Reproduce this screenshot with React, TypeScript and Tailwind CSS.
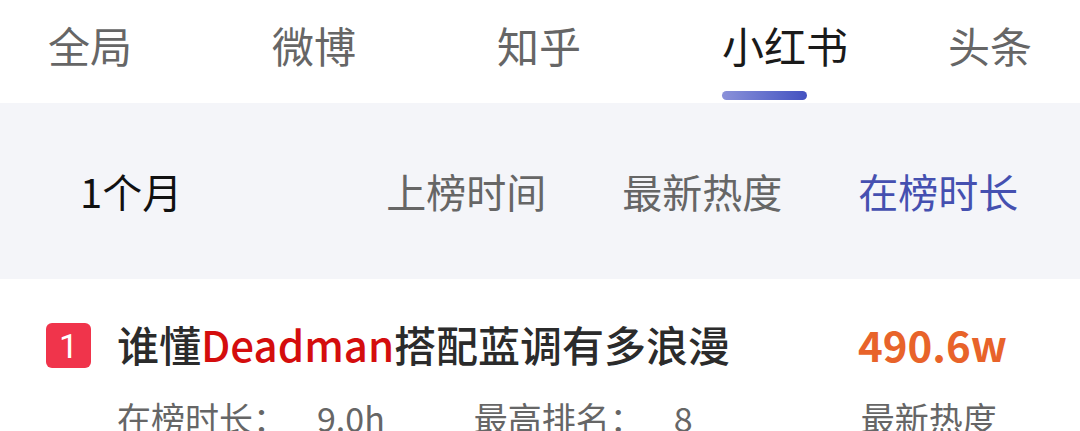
import React from 'react';

const tabs = [
  { label: '全局', ml: 'ml-[48px]' },
  { label: '微博', ml: 'ml-[140px]' },
  { label: '知乎', ml: 'ml-[141px]' },
  { label: '小红书', ml: 'ml-[141px]', active: true },
  { label: '头条', ml: 'ml-[100px]' },
];

const sorts = [
  { label: '上榜时间', ml: 'ml-[204px]' },
  { label: '最新热度', ml: 'ml-[76px]' },
  { label: '在榜时长', ml: 'ml-[76px]', active: true },
];

const App: React.FC = () => {
  return (
    <div
      className="w-[1080px] h-[431px] overflow-hidden bg-white"
      style={{ fontFamily: '"Noto Sans CJK SC", "Noto Sans", sans-serif' }}
    >
      {/* top tabs */}
      <div className="h-[103px] flex items-start bg-white">
        {tabs.map((t) => (
          <div key={t.label} className={`${t.ml} flex flex-col items-start shrink-0`}>
            <div
              className={`mt-[18px] text-[42px] leading-[54px] whitespace-nowrap ${
                t.active ? 'text-[#1a1a1a]' : 'text-[#666666]'
              }`}
            >
              {t.label}
            </div>
            {t.active && (
              <div className="mt-[19px] w-[85px] h-[9px] rounded-full bg-gradient-to-r from-[#8b91d9] to-[#4451c0]" />
            )}
          </div>
        ))}
      </div>

      {/* sort bar */}
      <div className="h-[176px] bg-[#f4f5f9] flex items-center">
        <div className="ml-[80px] text-[40px] text-[#111111] whitespace-nowrap">1个月</div>
        {sorts.map((s) => (
          <div
            key={s.label}
            className={`${s.ml} text-[40px] whitespace-nowrap ${
              s.active ? 'text-[#4550b0]' : 'text-[#666666]'
            }`}
          >
            {s.label}
          </div>
        ))}
      </div>

      {/* list item */}
      <div className="pt-[44px]">
        <div className="flex items-center h-[45px]">
          <div
            className="ml-[46px] w-[45px] h-[45px] rounded-[6px] bg-[#f0344b] flex items-center justify-center text-white text-[34px] leading-none"
            style={{ fontFamily: 'Roboto, "Noto Sans", sans-serif' }}
          >
            1
          </div>
          <div className="ml-[26px] w-[741px] -mt-[4px] text-[42px] font-medium text-[#2b2b2b] whitespace-nowrap">
            谁懂<span className="text-[#d40d0d]">Deadman</span>搭配蓝调有多浪漫
          </div>
          <div className="-mt-[4px] text-[42px] font-bold text-[#e8632a] whitespace-nowrap">490.6w</div>
        </div>
        <div className="flex items-center mt-[24px] text-[34px] text-[#666666] whitespace-nowrap">
          <div className="ml-[117px]">在榜时长：</div>
          <div className="ml-[30px]">9.0h</div>
          <div className="ml-[89px]">最高排名：</div>
          <div className="ml-[30px]">8</div>
          <div className="ml-[168px]">最新热度</div>
        </div>
      </div>
    </div>
  );
};

export default App;
